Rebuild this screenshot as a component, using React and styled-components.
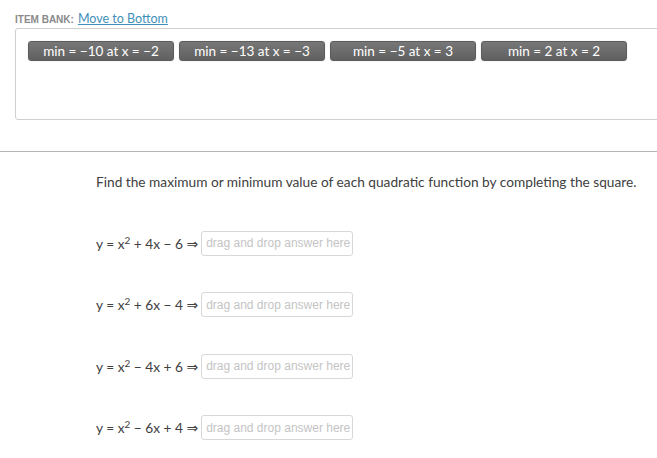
import React from 'react';
import styled, { createGlobalStyle } from 'styled-components';

const GlobalStyle = createGlobalStyle`
  html, body {
    margin: 0;
    padding: 0;
    background: #ffffff;
    overflow: hidden;
  }
  body {
    font-family: Lato, "Open Sans", sans-serif;
    color: #333333;
  }
`

const Page = styled.div`
  width: 657px;
  height: 458px;
  display: flex;
  flex-direction: column;
  overflow: hidden;
`

// Item bank
const BankSection = styled.section`
  padding: 11px 0 0 15px;
`
const BankHeader = styled.div`
  display: flex;
  align-items: baseline;
  gap: 4px;
  height: 17px;
`
const BankLabel = styled.span`
  font-family: "Liberation Sans", Arial, sans-serif;
  font-size: 10px;
  font-weight: 700;
  color: #8a8a8a;
`
const BankLink = styled.a`
  font-family: Lato, sans-serif;
  font-size: 12.5px;
  color: #3f8fb8;
  text-decoration: underline;
  cursor: pointer;
`
const BankBox = styled.div`
  margin-right: -10px;
  height: 92px;
  box-sizing: border-box;
  border: 1px solid #cfcfcf;
  border-radius: 3px;
  padding: 12px 0 0 12px;
  display: flex;
  align-items: flex-start;
  gap: 5px;
`
const Chip = styled.div`
  width: 146px;
  height: 20px;
  flex-shrink: 0;
  box-sizing: border-box;
  display: flex;
  align-items: center;
  justify-content: center;
  background: linear-gradient(#777777, #606060);
  border: 1px solid #5c5c5c;
  border-radius: 3px;
  color: #ffffff;
  font-family: Lato, sans-serif;
  font-size: 13.5px;
  box-shadow: 0 0 1px rgba(0, 0, 0, 0.3);
`

const Divider = styled.hr`
  margin: 31px 0 0 0;
  border: none;
  border-top: 1px solid #b4b4b4;
  height: 0;
`

// Questions
const Questions = styled.section`
  padding: 21px 0 0 96px;
  display: flex;
  flex-direction: column;
`
const Prompt = styled.p`
  margin: 0 0 39px 0;
  font-size: 13.7px;
  color: #404040;
  line-height: 18px;
`
const Row = styled.div`
  display: flex;
  align-items: center;
  height: 26px;
  margin-bottom: 35.5px;
`
const Equation = styled.span`
  font-size: 13.7px;
  color: #404040;
  white-space: pre;
  margin-right: 3px;
  sup {
    font-size: 10px;
    vertical-align: 5px;
    line-height: 0;
  }
`
const Arrow = styled.span`
  font-family: "DejaVu Sans", sans-serif;
  font-size: 14px;
`
const DropBox = styled.div`
  width: 152px;
  height: 25px;
  flex-shrink: 0;
  box-sizing: border-box;
  border: 1px solid #d8d8d8;
  border-radius: 3px;
  display: flex;
  align-items: center;
  padding-left: 4px;
  white-space: nowrap;
  overflow: hidden;
  font-family: "Liberation Sans", Arial, sans-serif;
  font-size: 12px;
  color: #c4c4c4;
`

const chips = [
  'min = \u221210 at x = \u22122',
  'min = \u221213 at x = \u22123',
  'min = \u22125 at x = 3',
  'min = 2 at x = 2',
]

const equations = ['+ 4x \u2212 6', '+ 6x \u2212 4', '\u2212 4x + 6', '\u2212 6x + 4']

export default function App() {
  return (
    <Page>
      <GlobalStyle />
      <BankSection>
        <BankHeader>
          <BankLabel>ITEM BANK:</BankLabel>
          <BankLink>Move to Bottom</BankLink>
        </BankHeader>
        <BankBox>
          {chips.map((c) => (
            <Chip key={c}>{c}</Chip>
          ))}
        </BankBox>
      </BankSection>
      <Divider />
      <Questions>
        <Prompt>Find the maximum or minimum value of each quadratic function by completing the square.</Prompt>
        {equations.map((rest) => (
          <Row key={rest}>
            <Equation>
              y = x<sup>2</sup> {rest} <Arrow>{'\u21D2'}</Arrow>
            </Equation>
            <DropBox>drag and drop answer here</DropBox>
          </Row>
        ))}
      </Questions>
    </Page>
  );
}
